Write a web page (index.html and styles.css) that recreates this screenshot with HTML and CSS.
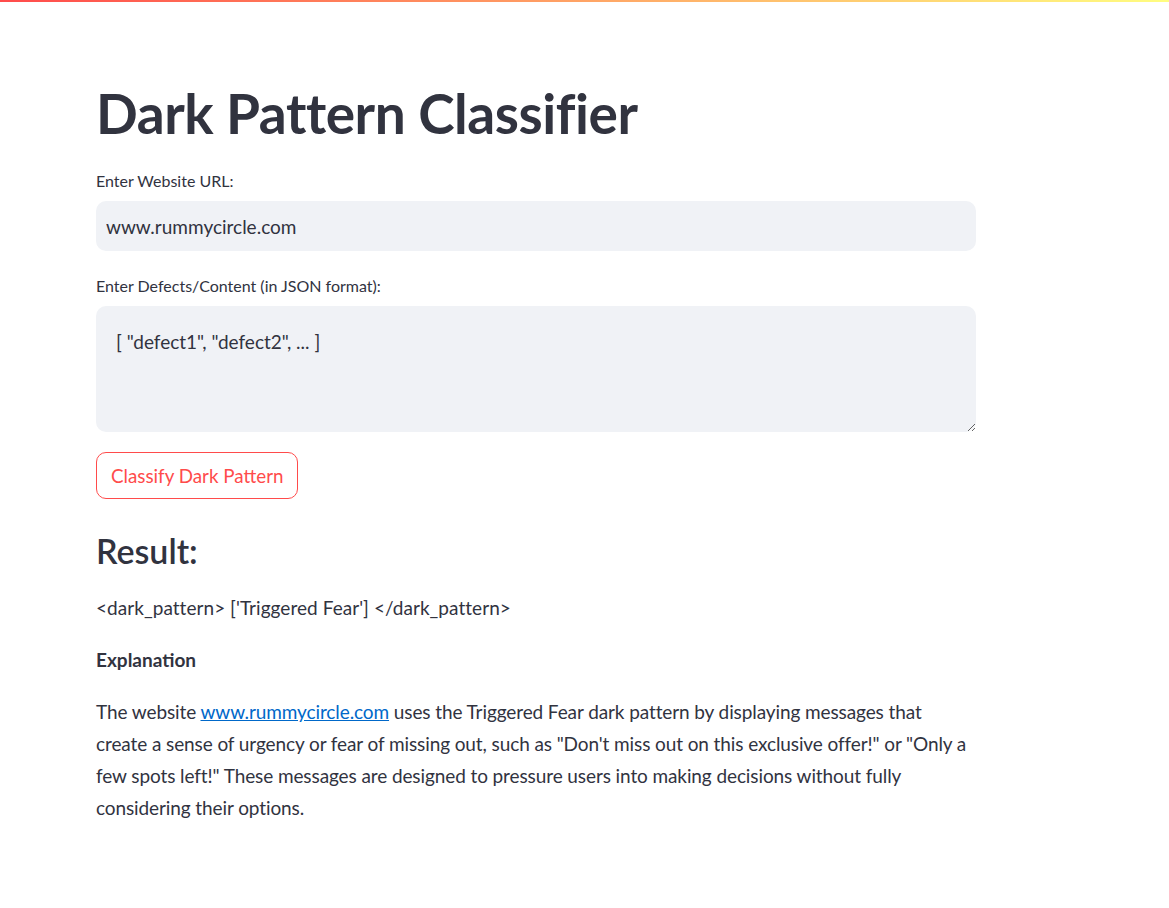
FILE: index.html
```html
<!DOCTYPE html>
<html lang="en">
<head>
<meta charset="utf-8">
<title>Dark Pattern Classifier</title>
<link rel="stylesheet" href="styles.css">
</head>
<body>
<div class="decoration"></div>
<main class="block">
  <h1 class="title">Dark Pattern Classifier</h1>
  <label class="label" for="url">Enter Website URL:</label>
  <input class="text-input" id="url" type="text" value="www.rummycircle.com">
  <label class="label label-second" for="defects">Enter Defects/Content (in JSON format):</label>
  <textarea class="text-area" id="defects">[ "defect1", "defect2", ... ]</textarea>
  <div class="button-row"><button class="btn" type="button">Classify Dark Pattern</button></div>
  <h3 class="result-heading">Result:</h3>
  <p class="result-line">&lt;dark_pattern&gt; ['Triggered Fear'] &lt;/dark_pattern&gt;</p>
  <p class="expl-heading">Explanation</p>
  <p class="expl">The website <a href="#" class="link">www.rummycircle.com</a> uses the Triggered Fear dark pattern by displaying messages that create a sense of urgency or fear of missing out, such as "Don't miss out on this exclusive offer!" or "Only a few spots left!" These messages are designed to pressure users into making decisions without fully considering their options.</p>
</main>
</body>
</html>
```
FILE: styles.css
```css
html, body {
  margin: 0;
  padding: 0;
  background: #ffffff;
}
body {
  font-family: "Lato", "Liberation Sans", sans-serif;
  color: #31333f;
}
.decoration {
  height: 2px;
  background: linear-gradient(90deg, #ff4b4b, #fffd80);
}
.block {
  width: 880px;
  margin-left: 96px;
  padding-top: 78px;
  display: flex;
  flex-direction: column;
}
.title {
  margin: 0;
  font-size: 55px;
  font-weight: 700;
  line-height: 66px;
  letter-spacing: -0.45px;
}
.label {
  margin-top: 21px;
  font-size: 16px;
  line-height: 28px;
  height: 28px;
}
.label-second {
  margin-top: 21px;
}
.text-input {
  margin-top: 6px;
  box-sizing: border-box;
  width: 880px;
  height: 50px;
  border: none;
  border-radius: 10px;
  background: #f0f2f6;
  padding: 0 10px;
  font-family: inherit;
  font-size: 19px;
  color: #31333f;
  outline: none;
}
.text-area {
  margin-top: 6px;
  box-sizing: border-box;
  width: 880px;
  height: 126px;
  border: none;
  border-radius: 10px;
  background: #f0f2f6;
  padding: 20px;
  font-family: inherit;
  font-size: 19px;
  line-height: 32px;
  color: #31333f;
  outline: none;
  resize: vertical;
}
.button-row {
  margin-top: 20px;
  display: flex;
}
.btn {
  box-sizing: border-box;
  height: 47px;
  padding: 0 14px;
  border: 1px solid #ff4b4b;
  border-radius: 10px;
  background: #ffffff;
  color: #ff4b4b;
  font-family: inherit;
  font-size: 18.8px;
  cursor: pointer;
}
.result-heading {
  margin: 31px 0 0 0;
  font-size: 34px;
  font-weight: 600;
  line-height: 42px;
}
.result-line,
.expl-heading,
.expl {
  margin: 20px 0 0 0;
  font-size: 19px;
  line-height: 32px;
}
.result-line {
  letter-spacing: 0.05px;
}
.expl {
  letter-spacing: -0.1px;
}
.expl-heading {
  font-weight: 700;
}
.link {
  color: #0068c9;
  text-decoration: underline;
}
```
